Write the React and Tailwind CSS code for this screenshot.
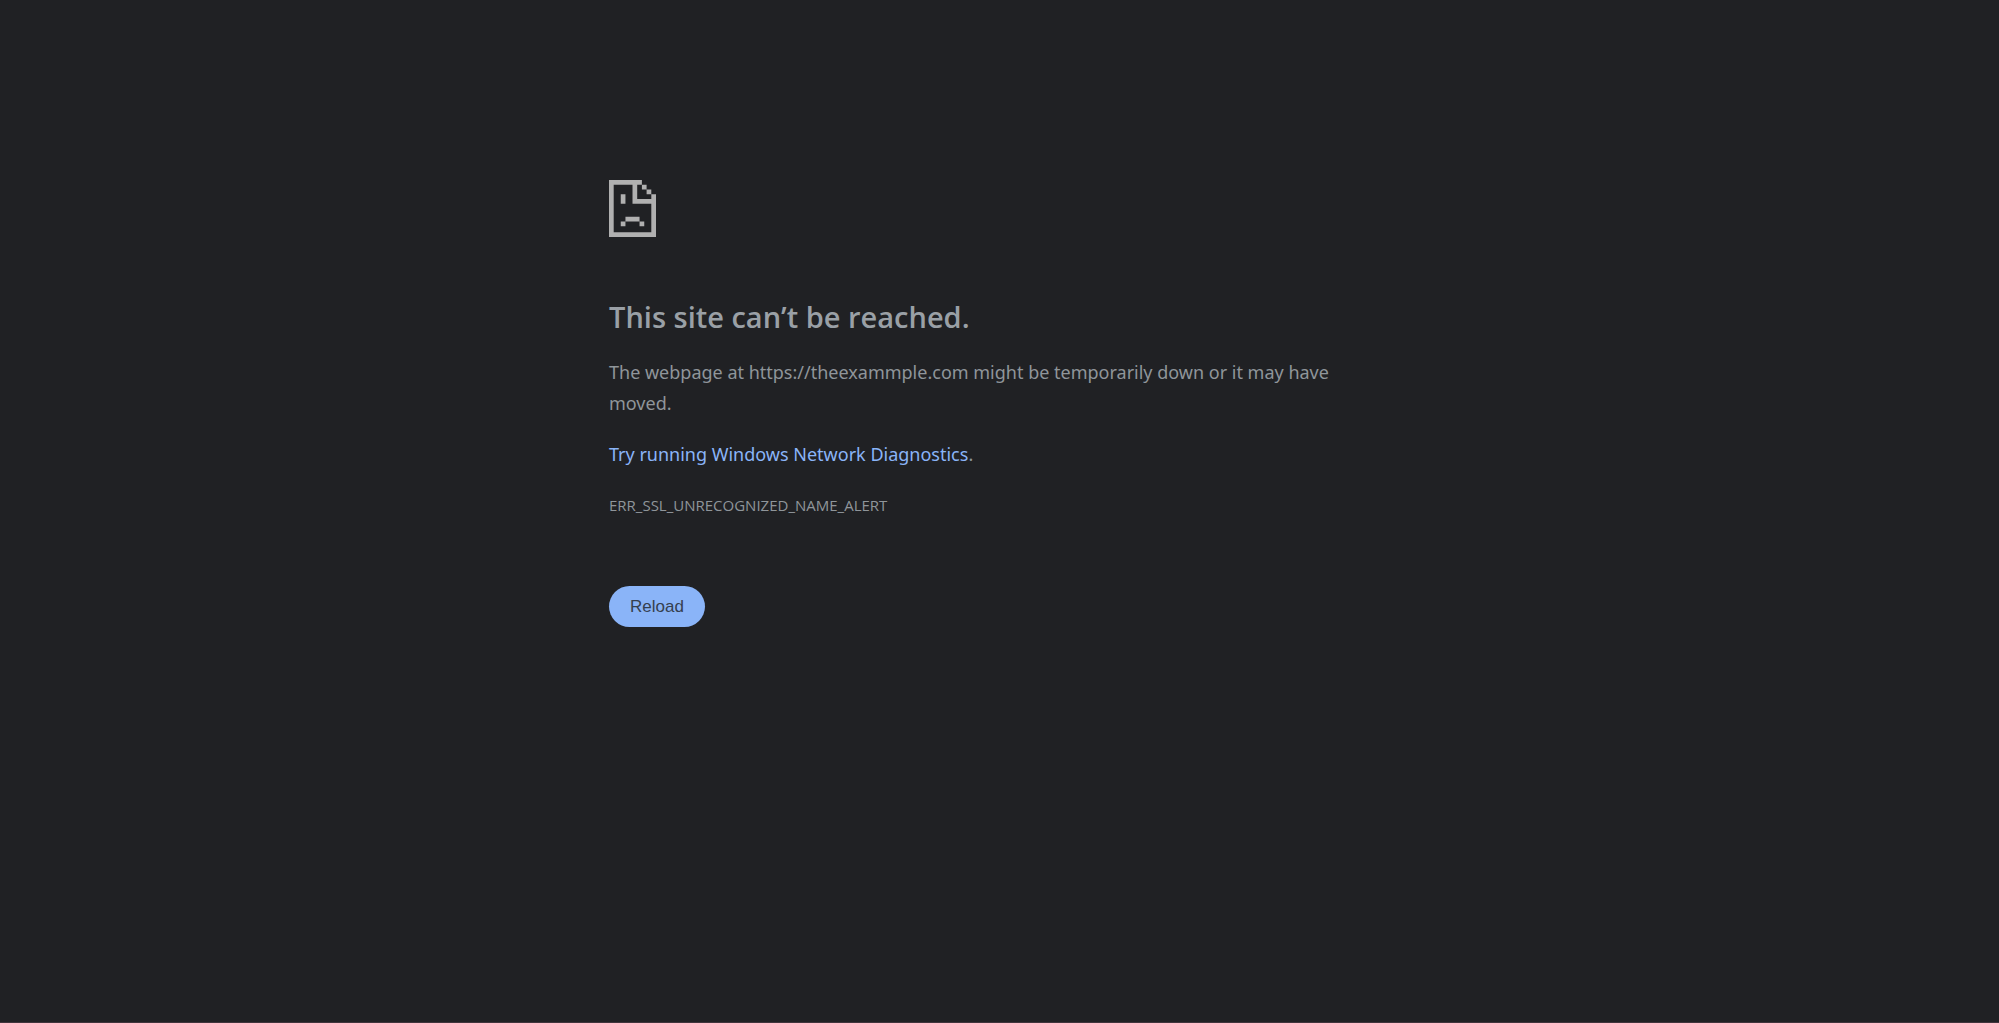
function SadPageIcon() {
  return (
    <svg viewBox="0 0 20 24" className="h-[57px] w-[47px]" fill="#b0b0b0" preserveAspectRatio="none" aria-hidden="true">
      <path d="M0 0H14V2H12V8H20V24H0ZM2 2V22H18V10H10V2Z" fillRule="evenodd" />
      <path d="M14 2h2v2h-2zM16 4h2v2h-2zM18 6h2v2h-2zM5 6h2v4h-2zM7 15.5h6v2h-6zM5 17.5h2v2h-2zM13 17.5h2v2h-2z" />
    </svg>
  );
}

export default function App() {
  return (
    <div className="min-h-screen border-b border-[#40343c] bg-[#202124] font-['Open_Sans',sans-serif] text-[#9aa0a6]">
      <main className="mx-auto max-w-[781px] pt-[180px]">
        <SadPageIcon />
        <h1 className="mt-[60px] text-[29px] leading-[40px] font-semibold">This site can’t be reached.</h1>
        <div className="mt-[20px] grid gap-[20px] leading-[31px] text-[#8f959a]">
          <p className="font-['Noto_Sans',sans-serif] text-[18px]">
            The webpage at https://theexammple.com might be temporarily down or it may have moved.
          </p>
          <p className="font-['Noto_Sans',sans-serif] text-[18px]">
            <a href="#diagnostics" className="text-[#8ab4f8]">Try running Windows Network Diagnostics</a>.
          </p>
          <p className="text-[15px]">ERR_SSL_UNRECOGNIZED_NAME_ALERT</p>
        </div>
        <button
          type="button"
          className="mt-[65px] h-[41px] rounded-full bg-[#8ab4f8] px-[21px] font-['Liberation_Sans',sans-serif] text-[17px] leading-[20px] text-[#35404f]"
        >
          Reload
        </button>
      </main>
    </div>
  );
}
